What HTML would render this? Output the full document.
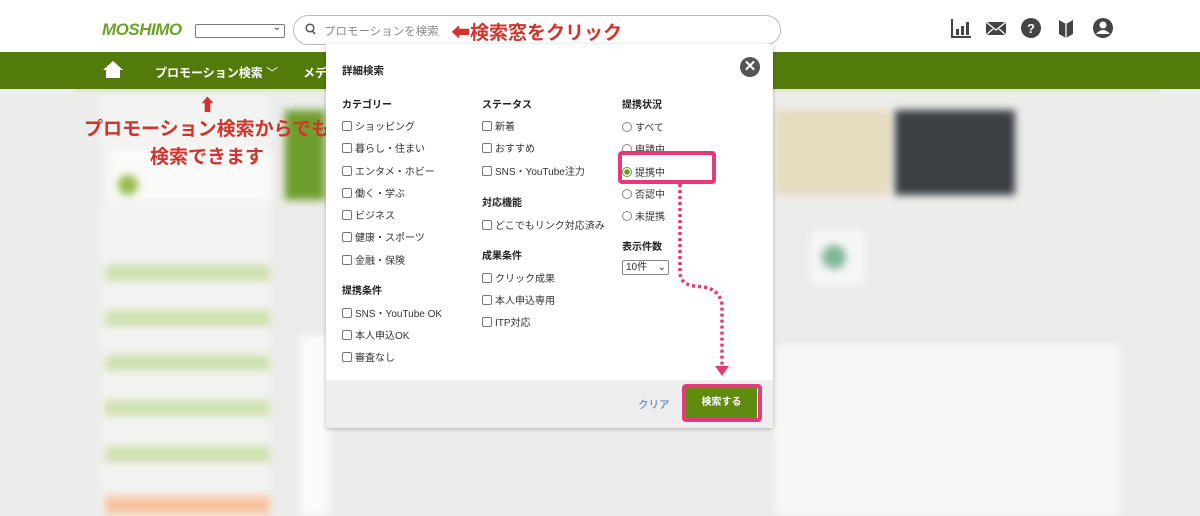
<!DOCTYPE html>
<html><head><meta charset="utf-8"><style>
*{margin:0;padding:0;box-sizing:border-box}
body{width:1200px;height:514px;overflow:hidden;background:#ececea;font-family:"Liberation Sans","Noto Sans CJK JP",sans-serif;position:relative;color:#333}
.a{position:absolute}
.blur{filter:blur(4px)}
.hdr{left:0;top:0;width:1200px;height:52px;background:#fff}
.nav{left:0;top:52px;width:1200px;height:37px;background:#537b0c}
.modal{left:326px;top:44px;width:447px;height:384px;background:#fff;box-shadow:0 1px 4px rgba(0,0,0,.25)}
.ft{left:0;top:336px;width:447px;height:48px;background:#eeeeee}
.h{font-size:10px;font-weight:bold;color:#222}
.it{font-size:10px;color:#333;white-space:nowrap}
.cb{display:inline-block;width:10px;height:10px;border:1px solid #777;border-radius:2px;vertical-align:-1px;margin-right:3px;background:#fff}
.rd{display:inline-block;width:10px;height:10px;border:1px solid #888;border-radius:50%;vertical-align:-1px;margin-right:3px;background:#fff}
.red{color:#d0342c;font-weight:bold}
</style></head><body>
<div class="a blur" style="left:100px;top:96px;width:170px;height:420px;background:#f3f3f1"></div>
<div class="a blur" style="left:110px;top:150px;width:160px;height:50px;background:#fafaf8"></div>
<div class="a blur" style="left:118px;top:175px;width:20px;height:20px;border-radius:50%;background:#9ab84a"></div>
<div class="a blur" style="left:285px;top:110px;width:40px;height:90px;background:#6e9e2c"></div>
<div class="a blur" style="left:105px;top:265px;width:165px;height:16px;background:#cfe0b0"></div>
<div class="a blur" style="left:105px;top:310px;width:165px;height:16px;background:#cfe0b0"></div>
<div class="a blur" style="left:105px;top:355px;width:165px;height:16px;background:#cfe0b0"></div>
<div class="a blur" style="left:105px;top:400px;width:165px;height:16px;background:#cfe0b0"></div>
<div class="a blur" style="left:105px;top:446px;width:165px;height:16px;background:#cfe0b0"></div>
<div class="a blur" style="left:105px;top:496px;width:165px;height:18px;background:#f7c3a0"></div>
<div class="a blur" style="left:300px;top:335px;width:30px;height:180px;background:#fafafa"></div>
<div class="a blur" style="left:775px;top:110px;width:115px;height:85px;background:#e6dcc0"></div>
<div class="a blur" style="left:895px;top:110px;width:120px;height:85px;background:#3a3f44"></div>
<div class="a blur" style="left:810px;top:230px;width:55px;height:55px;background:#f6f6f4;border-radius:8px"></div>
<div class="a blur" style="left:822px;top:245px;width:24px;height:24px;background:#7fb79c;border-radius:50%"></div>
<div class="a blur" style="left:775px;top:345px;width:345px;height:170px;background:#f7f7f6"></div>
<div class="a" style="left:75px;top:88px;width:1085px;height:4px;background:#e0e6d4"></div>
<div class="a hdr"></div>
<div class="a" style="left:102px;top:20px;font-size:17px;font-weight:bold;color:#6ea12a;letter-spacing:-.5px;font-style:italic">MOSHIMO</div>
<div class="a" style="left:195px;top:24px;width:90px;height:14px;border:1px solid #777;border-radius:2px;background:#fff"><span style="position:absolute;right:3px;top:-3px;font-size:10px">⌄</span></div>
<div class="a" style="left:293px;top:15px;width:488px;height:30px;border:1px solid #bbb;border-radius:15px;background:#fff"></div>
<svg class="a" style="left:305px;top:23px" width="12" height="13"><circle cx="5" cy="5" r="3.8" stroke="#555" stroke-width="1.5" fill="none"/><line x1="7.5" y1="8" x2="10" y2="11" stroke="#555" stroke-width="1.5"/></svg>
<div class="a" style="left:324px;top:23px;font-size:11.5px;color:#888">プロモーションを検索</div>
<div class="a red" style="left:451px;top:18px;font-size:19px">⬅検索窓をクリック</div>
<svg class="a" style="left:950px;top:18px" width="175" height="22" fill="#444">
<path d="M1 1v19h20v-2H3V1z"/><rect x="6" y="11" width="3" height="6"/><rect x="11" y="8" width="3" height="9"/><rect x="16" y="4" width="3" height="13"/>
<path d="M36 4h20v13H36z" fill="#444"/><path d="M36 4l10 8 10-8M36 17l7-6M56 17l-7-6" stroke="#fff" stroke-width="1.3" fill="none"/>
<circle cx="81" cy="10" r="10"/><text x="81" y="15" font-size="13" font-weight="bold" fill="#fff" text-anchor="middle" font-family="Liberation Sans">?</text>
<path d="M109 2l7 4 7-4v14l-7 4-7-4z"/><path d="M116 6v14" stroke="#fff" stroke-width="1.3"/>
<circle cx="153" cy="10" r="10"/><circle cx="153" cy="7" r="3.5" fill="#fff"/><path d="M146 16q7-8 14 0z" fill="#fff"/>
</svg>
<div class="a nav"></div>
<svg class="a" style="left:103px;top:61px" width="20" height="17"><path d="M10 0L0 9h3v8h14V9h3z" fill="#fff"/></svg>
<div class="a" style="left:155px;top:64px;font-size:12px;font-weight:bold;color:#fff">プロモーション検索 <span style="font-weight:normal">﹀</span></div>
<div class="a" style="left:303px;top:64px;font-size:12px;font-weight:bold;color:#fff">メデ</div>
<div class="a red" style="left:199px;top:91px;font-size:17px">⬆</div>
<div class="a red" style="left:80px;top:116px;font-size:19px;line-height:28px;text-align:center;width:254px;white-space:nowrap">プロモーション検索からでも<br>検索できます</div>
<div class="a modal">
<div class="a h" style="left:16px;top:19px;font-size:10.5px">詳細検索</div>
<div class="a" style="left:414px;top:13px;width:20px;height:20px;border-radius:50%;background:#555;color:#fff;font-size:15px;font-weight:bold;text-align:center;line-height:20px">✕</div>
<div class="a" style="left:16px;top:52px">
<div class="h" style="height:22px">カテゴリー</div>
<div class="it" style="height:22.3px"><span class="cb"></span>ショッピング</div>
<div class="it" style="height:22.3px"><span class="cb"></span>暮らし・住まい</div>
<div class="it" style="height:22.3px"><span class="cb"></span>エンタメ・ホビー</div>
<div class="it" style="height:22.3px"><span class="cb"></span>働く・学ぶ</div>
<div class="it" style="height:22.3px"><span class="cb"></span>ビジネス</div>
<div class="it" style="height:22.3px"><span class="cb"></span>健康・スポーツ</div>
<div class="it" style="height:30px"><span class="cb"></span>金融・保険</div>
<div class="h" style="height:23px">提携条件</div>
<div class="it" style="height:22.3px"><span class="cb"></span>SNS・YouTube OK</div>
<div class="it" style="height:22.3px"><span class="cb"></span>本人申込OK</div>
<div class="it" style="height:22.3px"><span class="cb"></span>審査なし</div>
</div>
<div class="a" style="left:156px;top:52px">
<div class="h" style="height:22px">ステータス</div>
<div class="it" style="height:22.3px"><span class="cb"></span>新着</div>
<div class="it" style="height:22.3px"><span class="cb"></span>おすすめ</div>
<div class="it" style="height:31px"><span class="cb"></span>SNS・YouTube注力</div>
<div class="h" style="height:23px">対応機能</div>
<div class="it" style="height:30px"><span class="cb"></span>どこでもリンク対応済み</div>
<div class="h" style="height:23px">成果条件</div>
<div class="it" style="height:22.3px"><span class="cb"></span>クリック成果</div>
<div class="it" style="height:22.3px"><span class="cb"></span>本人申込専用</div>
<div class="it" style="height:22.3px"><span class="cb"></span>ITP対応</div>
</div>
<div class="a" style="left:296px;top:52px">
<div class="h" style="height:23px">提携状況</div>
<div class="it" style="height:22.3px"><span class="rd"></span>すべて</div>
<div class="it" style="height:22.3px"><span class="rd"></span>申請中</div>
<div class="it" style="height:22.3px"><span class="rd" style="border-color:#6a9a2a;background:radial-gradient(#6a9a2a 0 2.5px,#fff 3px)"></span>提携中</div>
<div class="it" style="height:22.3px"><span class="rd"></span>否認中</div>
<div class="it" style="height:30px"><span class="rd"></span>未提携</div>
<div class="h" style="height:22px">表示件数</div>
<div class="it" style="width:47px;height:15px;border:1px solid #888;border-radius:2px;padding-left:3px;line-height:13px">10件 <span style="float:right;margin-right:2px">⌄</span></div>
</div>
<div class="a ft">
<div class="a" style="left:312px;top:17px;font-size:10.5px;color:#3a73c0">クリア</div>
<div class="a" style="left:360px;top:8px;width:71px;height:30px;background:#5f8c0f;color:#fff;font-size:10px;font-weight:bold;text-align:center;line-height:30px">検索する</div>
</div>
</div>
<div class="a" style="left:618px;top:151px;width:98px;height:33px;border:4px solid #e6397c;border-radius:4px"></div>
<div class="a" style="left:682px;top:384px;width:80px;height:38px;border:4px solid #e6397c;border-radius:4px"></div>
<svg class="a" style="left:660px;top:184px" width="80" height="200"><path d="M20 0V88q0 12 14 14l10 1q16 3 18 18V188" stroke="#e6397c" stroke-width="3.5" stroke-dasharray="3 3" fill="none"/><path d="M55 182h14l-7 10z" fill="#e6397c"/></svg>
</body></html>
